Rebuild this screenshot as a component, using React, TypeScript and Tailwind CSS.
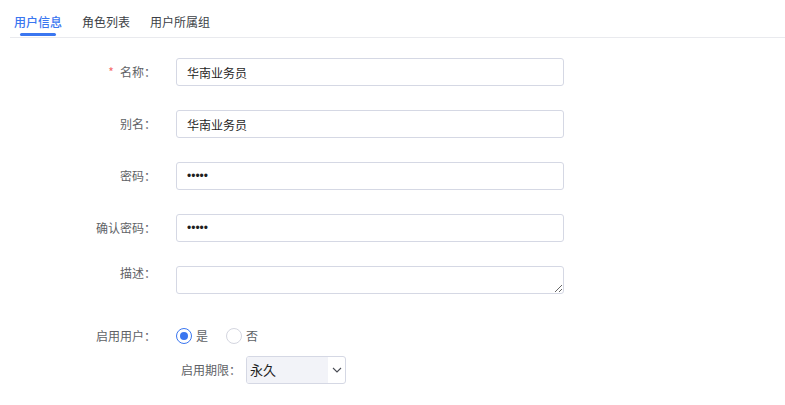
import { useState } from 'react';

const font = "font-['Noto_Sans_CJK_SC','Noto_Sans',sans-serif]";

const tabs = ['用户信息', '角色列表', '用户所属组'];

function Label({ text, required }: { text: string; required?: boolean }) {
  return (
    <div className="w-[156px] shrink-0 text-right text-[12px] leading-7 text-[#606266]">
      {required && <span className="mr-[6px] text-[#f56c6c]">*</span>}
      {text}：
    </div>
  );
}

function Radio({ checked, label, onClick }: { checked: boolean; label: string; onClick: () => void }) {
  return (
    <button type="button" onClick={onClick} className="flex items-center gap-[4px] text-[12px] text-[#606266]">
      <span
        className={
          checked
            ? 'flex h-[16px] w-[16px] items-center justify-center rounded-full border border-[#3a76f0] bg-white'
            : 'flex h-[16px] w-[16px] items-center justify-center rounded-full border border-[#d4d6e0] bg-white'
        }
      >
        {checked && <span className="h-[8px] w-[8px] rounded-full bg-[#3a76f0]" />}
      </span>
      {label}
    </button>
  );
}

export default function App() {
  const [active, setActive] = useState(0);
  const [enabled, setEnabled] = useState(true);

  const inputCls =
    'h-7 w-[388px] rounded-[3px] border border-[#d5d8e4] bg-white px-[10px] text-[12px] text-[#1f1f1f] outline-none';

  return (
    <div className={`h-[405px] w-[785px] overflow-hidden bg-white ${font}`}>
      {/* tabs */}
      <div className="ml-[10px] flex h-[38px] gap-5 border-b border-[#e9eaee] pl-1">
        {tabs.map((t, i) => (
          <button
            key={t}
            type="button"
            onClick={() => setActive(i)}
            className="flex flex-col items-center pt-[14px]"
          >
            <span
              className={
                i === active
                  ? 'text-[12px] leading-4 font-medium text-[#3a76f0]'
                  : 'text-[12px] leading-4 text-[#3c3f46]'
              }
            >
              {t}
            </span>
            {i === active && <span className="mt-[3px] h-[3px] w-9 rounded-full bg-[#3a76f0]" />}
          </button>
        ))}
      </div>

      {/* form */}
      <div className="mt-5 flex flex-col gap-6">
        <div className="flex items-center gap-5">
          <Label text="名称" required />
          <input className={inputCls} defaultValue="华南业务员" />
        </div>
        <div className="flex items-center gap-5">
          <Label text="别名" />
          <input className={inputCls} defaultValue="华南业务员" />
        </div>
        <div className="flex items-center gap-5">
          <Label text="密码" />
          <input className={`${inputCls} font-['Liberation_Sans',Arial,sans-serif]`} type="password" defaultValue="12345" />
        </div>
        <div className="flex items-center gap-5">
          <Label text="确认密码" />
          <input className={`${inputCls} font-['Liberation_Sans',Arial,sans-serif]`} type="password" defaultValue="12345" />
        </div>
        <div className="flex items-start gap-5">
          <div className="w-[156px] shrink-0 text-right text-[12px] leading-[14px] text-[#606266]">描述：</div>
          <textarea className="block h-7 w-[388px] rounded-[3px] border border-[#d5d8e4] bg-white px-[10px] py-1 text-[12px] outline-none" />
        </div>
      </div>

      <div className="mt-7 flex items-center gap-5">
        <Label text="启用用户" />
        <div className="flex items-center gap-[18px]">
          <Radio checked={enabled} label="是" onClick={() => setEnabled(true)} />
          <Radio checked={!enabled} label="否" onClick={() => setEnabled(false)} />
        </div>
      </div>

      <div className="mt-[6px] flex items-center gap-[5px] pl-[181px]">
        <span className="text-[12px] leading-7 text-[#606266]">启用期限：</span>
        <div className="flex h-7 w-[100px] items-stretch overflow-hidden rounded-[3px] border border-[#d5d8e4] bg-white">
          <span className="flex flex-1 items-center bg-[#f2f3f8] pl-[3px] text-[13px] text-[#1f1f1f]">永久</span>
          <span className="flex w-[17px] items-center justify-center">
            <svg width="10" height="6" viewBox="0 0 10 6" fill="none">
              <path d="M1 1l4 4 4-4" stroke="#4a4d55" strokeWidth="1.1" />
            </svg>
          </span>
        </div>
      </div>
    </div>
  );
}
